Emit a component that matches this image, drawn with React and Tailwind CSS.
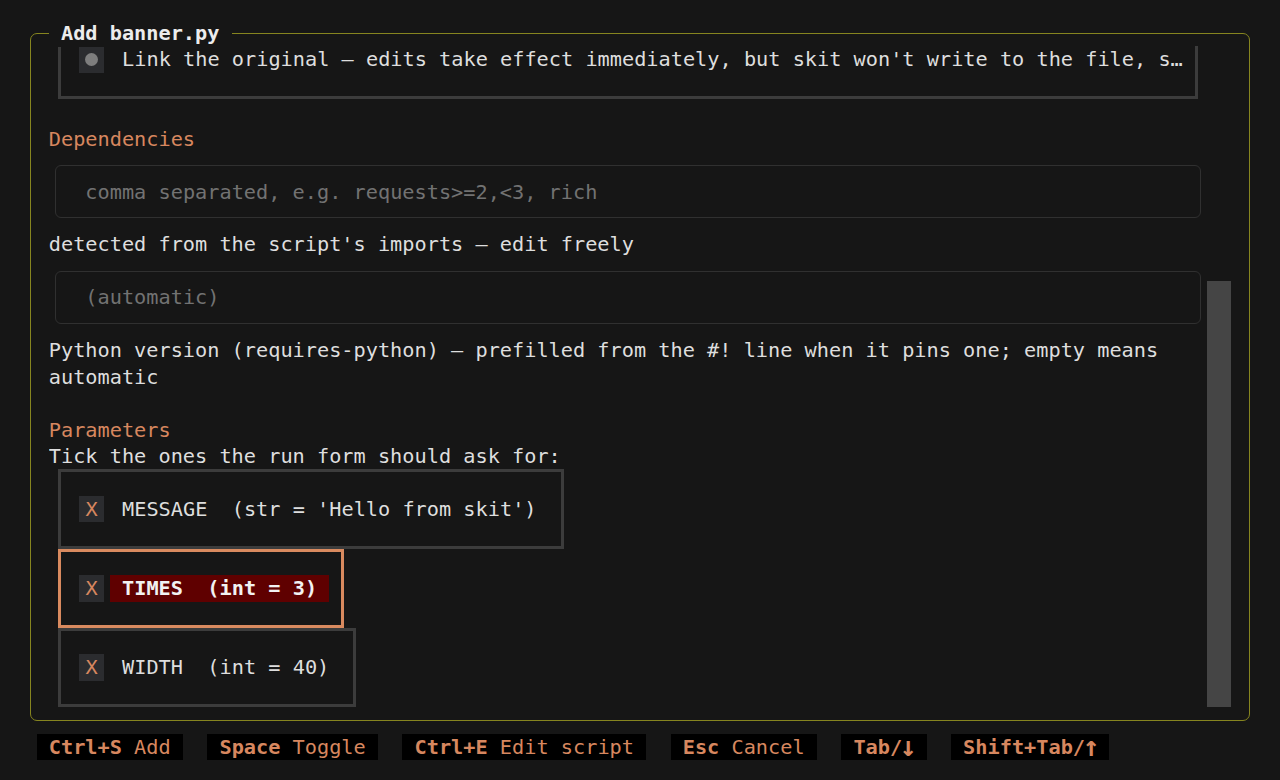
import React from "react";

const ROW = "h-[26.44px] leading-[26.44px]";

function Radio() {
  return (
    <div className={`flex items-center ${ROW}`}>
      <div className="w-[18.2px] shrink-0" />
      <div className="w-[24.38px] h-[26.44px] shrink-0 bg-[#2b2c2f] flex items-center justify-center">
        <div className="w-[13px] h-[13px] rounded-full bg-[#7e7e7e]" />
      </div>
      <div className="w-[18.3px] shrink-0" />
      <span className="whitespace-pre text-[#dedede]">
        Link the original — edits take effect immediately, but skit won't write to the file, s…
      </span>
    </div>
  );
}

function Check({ label, width, focused }) {
  return (
    <div
      className={`ml-[9.5px] h-[79.32px] border-[3px] flex items-center ${
        focused ? "border-[#d98a5f]" : "border-[#3c3c3c]"
      }`}
      style={{ width }}
    >
      <div className="w-[18.2px] shrink-0" />
      <div className="w-[24.38px] h-[26.44px] shrink-0 bg-[#2b2c2f] flex items-center justify-center text-[#d7875f]">
        X
      </div>
      <div className="w-[6px] shrink-0" />
      <span
        className={`whitespace-pre ${ROW} ${
          focused ? "bg-[#5f0000] text-[#f2f2f2] font-bold" : "text-[#dedede]"
        }`}
      >
        {label}
      </span>
    </div>
  );
}

function InputBox({ placeholder }) {
  return (
    <div className="h-[79.32px] flex items-center">
      <div className="ml-[6.1px] w-[1146px] h-[52.88px] border border-[#303030] rounded-[6px] flex items-center pl-[29.5px] text-[#727272] whitespace-pre">
        {placeholder}
      </div>
    </div>
  );
}

function Arrow({ c }) {
  return (
    <span className="inline-flex w-[12.19px] h-[26.44px] align-top items-center justify-center overflow-visible">
      <span className="text-[28px] leading-[26.44px] font-bold">{c}</span>
    </span>
  );
}

function Key({ k, d, arrow }) {
  return (
    <div className={`bg-black ${ROW} whitespace-pre text-[#d7875f] px-[12.19px] flex`}>
      <span className="font-bold">{k}</span>
      {arrow ? <Arrow c={arrow} /> : null}
      {d ? <span>{" " + d}</span> : null}
    </div>
  );
}

export default function App() {
  return (
    <div className="w-[1280px] h-[780px] bg-[#161616] overflow-hidden font-['DejaVu_Sans_Mono',monospace] text-[20.25px] text-[#dedede] pt-[33px]">
      <div className="relative ml-[30px] w-[1220px] h-[688.2px] border border-[#86851f] rounded-[7px] pl-[17.76px] pr-[17.8px] pt-[12.4px] flex">
        <div className={`absolute top-[-13.72px] left-[17.76px] bg-[#161616] ${ROW} whitespace-pre font-bold text-[#ececec]`}>
          {" Add banner.py "}
        </div>
        <div className="w-[1158px] h-[661px] overflow-hidden flex flex-col shrink-0">
          <div className="ml-[9.5px] w-[1139.5px] h-[52.88px] border-l-[3px] border-r-[3px] border-b-[3px] border-[#3c3c3c]">
            <Radio />
          </div>
          <div className={ROW} />
          <div className={`${ROW} text-[#d7875f]`}>Dependencies</div>
          <InputBox placeholder="comma separated, e.g. requests>=2,<3, rich" />
          <div className={`${ROW} whitespace-pre`}>detected from the script's imports — edit freely</div>
          <InputBox placeholder="(automatic)" />
          <div className={`${ROW} whitespace-pre`}>
            Python version (requires-python) — prefilled from the #! line when it pins one; empty means
          </div>
          <div className={ROW}>automatic</div>
          <div className={ROW} />
          <div className={`${ROW} text-[#d7875f]`}>Parameters</div>
          <div className={`${ROW} whitespace-pre`}>Tick the ones the run form should ask for:</div>
          <Check label=" MESSAGE  (str = 'Hello from skit') " width="505.5px" />
          <Check label=" TIMES  (int = 3) " width="286px" focused />
          <Check label=" WIDTH  (int = 40) " width="298px" />
        </div>
        <div className="w-[24.38px] shrink-0">
          <div className="mt-[234.6px] h-[426px] bg-[#454545]" />
        </div>
      </div>
      <div className="mt-[12.7px] pl-[36.57px] flex gap-[24.38px]">
        <Key k="Ctrl+S" d="Add" />
        <Key k="Space" d="Toggle" />
        <Key k="Ctrl+E" d="Edit script" />
        <Key k="Esc" d="Cancel" />
        <Key k="Tab/" arrow="↓" />
        <Key k="Shift+Tab/" arrow="↑" />
      </div>
    </div>
  );
}
